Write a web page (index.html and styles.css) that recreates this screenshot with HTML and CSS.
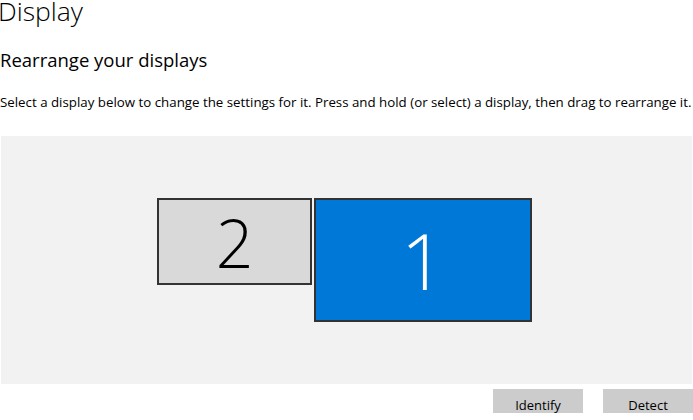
FILE: index.html
```html
<!DOCTYPE html>
<html>
<head>
<meta charset="utf-8">
<link rel="stylesheet" href="styles.css">
</head>
<body>
<div class="page">
  <h1 class="title">Display</h1>
  <h2 class="subtitle">Rearrange your displays</h2>
  <p class="desc">Select a display below to change the settings for it. Press and hold (or select) a display, then drag to rearrange it.</p>
  <div class="arrange">
    <div class="monitor secondary"><span class="num num-2">2</span></div>
    <div class="monitor primary"><span class="num num-1">1</span></div>
  </div>
  <div class="actions">
    <button class="btn">Identify</button>
    <button class="btn">Detect</button>
  </div>
</div>
</body>
</html>
```

FILE: styles.css
```css
html, body {
  margin: 0;
  padding: 0;
  background: #ffffff;
  overflow: hidden;
}
.page {
  width: 693px;
  height: 420px;
  font-family: "Open Sans", "Noto Sans", sans-serif;
  color: #000;
}
.title {
  margin: -7px 0 0 -2px;
  font-size: 26.5px;
  font-weight: 300;
  line-height: 36px;
}
.subtitle {
  margin: 18px 0 0 0;
  font-size: 18.5px;
  font-weight: 400;
  line-height: 26px;
}
.desc {
  margin: 19px 0 0 0;
  font-size: 13.3px;
  line-height: 20px;
  white-space: nowrap;
}
.arrange {
  margin: 24px 1px 0 1px;
  height: 248px;
  background: #f2f2f2;
  display: flex;
  align-items: flex-start;
  gap: 2px;
  padding: 62px 0 0 156px;
  box-sizing: border-box;
}
.monitor {
  box-sizing: border-box;
  border: 2px solid #333333;
  display: flex;
  justify-content: center;
  align-items: center;
}
.secondary {
  width: 155px;
  height: 87px;
  background: #d9d9d9;
}
.primary {
  width: 218px;
  height: 124px;
  background: #0078d7;
}
.num {
  font-weight: 300;
  line-height: 1;
}
.num-2 {
  font-size: 66px;
  color: #000;
}
.num-1 {
  font-size: 78px;
  color: #fff;
}
.actions {
  display: flex;
  justify-content: flex-end;
  gap: 20px;
  margin-top: 5px;
}
.btn {
  width: 90px;
  height: 32px;
  border: none;
  background: #cccccc;
  font-family: "Open Sans", "Noto Sans", sans-serif;
  font-size: 13px;
  color: #000;
  padding: 0;
}
```
